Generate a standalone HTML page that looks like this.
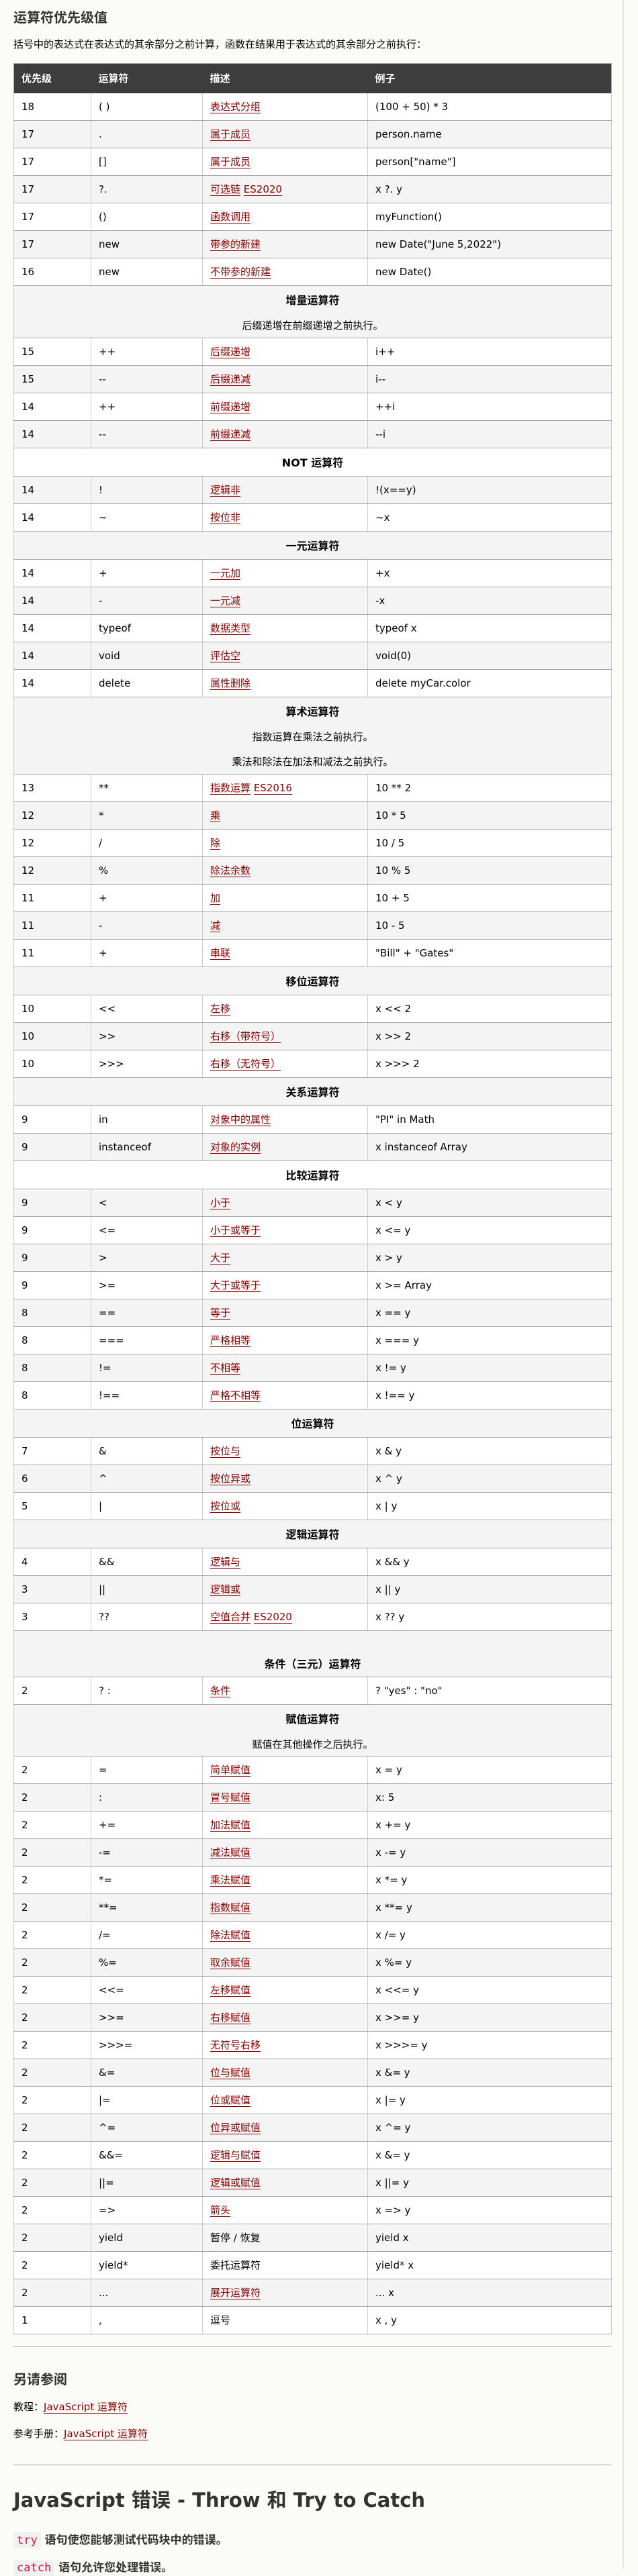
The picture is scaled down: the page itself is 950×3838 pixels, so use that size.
<!DOCTYPE html>
<html><head><meta charset="utf-8">
<style>
html,body{margin:0;padding:0;}
body{width:950px;height:3828px;overflow:hidden;background:#fbfbf7;font-family:"DejaVu Sans","Noto Sans CJK SC",sans-serif;font-size:15px;color:#000;position:relative;}
.vline{position:absolute;left:927px;top:0;width:2px;height:3828px;background:#e6e6e4;}
.wrap{position:absolute;left:20px;top:0;width:890px;}
h2.t{font-size:20px;color:#333;margin:0;position:absolute;top:12px;line-height:28px;}
p.intro{position:absolute;top:55px;margin:0;line-height:22px;font-size:15px;}
table{position:absolute;top:94px;left:0;width:890px;border-collapse:collapse;table-layout:fixed;border:1px solid #aaa;}
th{background:#3d3d3d;color:#fff;text-align:left;font-weight:bold;padding:0 11px;height:44px;line-height:22px;font-size:15px;box-sizing:border-box;}
td{padding:0 11px;height:40px;line-height:20px;border-left:1px solid #ccc;border-right:1px solid #ccc;border-bottom:1px solid #aaa;vertical-align:middle;white-space:nowrap;overflow:hidden;}
tbody tr:nth-child(odd){background:#fff;}
tbody tr:nth-child(even){background:#f4f4f4;}
a{color:#8b0000;text-decoration:none;border-bottom:1px solid #8b0000;}
td.s{text-align:center;padding:0 11px;vertical-align:top;}
td.s .h{margin-top:10px;height:24px;line-height:24px;font-size:16px;font-weight:bold;}
td.s .p{margin-top:14px;height:22px;line-height:22px;}
td.s .p+.p{margin-top:15px;}
hr{position:absolute;left:0;width:890px;border:0;height:1px;background:#aaa;margin:0;}
.abs{position:absolute;left:0;margin:0;}
code{font-family:"DejaVu Sans Mono",monospace;color:#dc143c;background:#f1f1f1;padding:2px 5px;font-weight:normal;}
</style></head><body>
<div class="vline"></div>
<div class="wrap">
<h2 class="t">运算符优先级值</h2>
<p class="intro">括号中的表达式在表达式的其余部分之前计算，函数在结果用于表达式的其余部分之前执行：</p>
<table>
<colgroup><col style="width:115px"><col style="width:166px"><col style="width:246px"><col style="width:363px"></colgroup>
<thead><tr><th>优先级</th><th>运算符</th><th>描述</th><th>例子</th></tr></thead>
<tbody>
<tr><td>18</td><td>( )</td><td><a>表达式分组</a></td><td>(100 + 50) * 3</td></tr>
<tr><td>17</td><td>.</td><td><a>属于成员</a></td><td>person.name</td></tr>
<tr><td>17</td><td>[]</td><td><a>属于成员</a></td><td>person["name"]</td></tr>
<tr><td>17</td><td>?.</td><td><a>可选链</a> <a>ES2020</a></td><td>x ?. y</td></tr>
<tr><td>17</td><td>()</td><td><a>函数调用</a></td><td>myFunction()</td></tr>
<tr><td>17</td><td>new</td><td><a>带参的新建</a></td><td>new Date("June 5,2022")</td></tr>
<tr><td>16</td><td>new</td><td><a>不带参的新建</a></td><td>new Date()</td></tr>
<tr><td colspan="4" class="s" style="height:77px"><div class="h">增量运算符</div><div class="p">后缀递增在前缀递增之前执行。</div></td></tr>
<tr><td>15</td><td>++</td><td><a>后缀递增</a></td><td>i++</td></tr>
<tr><td>15</td><td>--</td><td><a>后缀递减</a></td><td>i--</td></tr>
<tr><td>14</td><td>++</td><td><a>前缀递增</a></td><td>++i</td></tr>
<tr><td>14</td><td>--</td><td><a>前缀递减</a></td><td>--i</td></tr>
<tr><td colspan="4" class="s" style="height:41px"><div class="h">NOT 运算符</div></td></tr>
<tr><td>14</td><td>!</td><td><a>逻辑非</a></td><td>!(x==y)</td></tr>
<tr><td>14</td><td>~</td><td><a>按位非</a></td><td>~x</td></tr>
<tr><td colspan="4" class="s" style="height:41px"><div class="h">一元运算符</div></td></tr>
<tr><td>14</td><td>+</td><td><a>一元加</a></td><td>+x</td></tr>
<tr><td>14</td><td>-</td><td><a>一元减</a></td><td>-x</td></tr>
<tr><td>14</td><td>typeof</td><td><a>数据类型</a></td><td>typeof x</td></tr>
<tr><td>14</td><td>void</td><td><a>评估空</a></td><td>void(0)</td></tr>
<tr><td>14</td><td>delete</td><td><a>属性删除</a></td><td>delete myCar.color</td></tr>
<tr><td colspan="4" class="s" style="height:114px"><div class="h">算术运算符</div><div class="p">指数运算在乘法之前执行。</div><div class="p">乘法和除法在加法和减法之前执行。</div></td></tr>
<tr><td>13</td><td>**</td><td><a>指数运算</a> <a>ES2016</a></td><td>10 ** 2</td></tr>
<tr><td>12</td><td>*</td><td><a>乘</a></td><td>10 * 5</td></tr>
<tr><td>12</td><td>/</td><td><a>除</a></td><td>10 / 5</td></tr>
<tr><td>12</td><td>%</td><td><a>除法余数</a></td><td>10 % 5</td></tr>
<tr><td>11</td><td>+</td><td><a>加</a></td><td>10 + 5</td></tr>
<tr><td>11</td><td>-</td><td><a>减</a></td><td>10 - 5</td></tr>
<tr><td>11</td><td>+</td><td><a>串联</a></td><td>"Bill" + "Gates"</td></tr>
<tr><td colspan="4" class="s" style="height:41px"><div class="h">移位运算符</div></td></tr>
<tr><td>10</td><td>&lt;&lt;</td><td><a>左移</a></td><td>x &lt;&lt; 2</td></tr>
<tr><td>10</td><td>&gt;&gt;</td><td><a>右移（带符号）</a></td><td>x &gt;&gt; 2</td></tr>
<tr><td>10</td><td>&gt;&gt;&gt;</td><td><a>右移（无符号）</a></td><td>x &gt;&gt;&gt; 2</td></tr>
<tr><td colspan="4" class="s" style="height:41px"><div class="h">关系运算符</div></td></tr>
<tr><td>9</td><td>in</td><td><a>对象中的属性</a></td><td>"PI" in Math</td></tr>
<tr><td>9</td><td>instanceof</td><td><a>对象的实例</a></td><td>x instanceof Array</td></tr>
<tr><td colspan="4" class="s" style="height:41px"><div class="h">比较运算符</div></td></tr>
<tr><td>9</td><td>&lt;</td><td><a>小于</a></td><td>x &lt; y</td></tr>
<tr><td>9</td><td>&lt;=</td><td><a>小于或等于</a></td><td>x &lt;= y</td></tr>
<tr><td>9</td><td>&gt;</td><td><a>大于</a></td><td>x &gt; y</td></tr>
<tr><td>9</td><td>&gt;=</td><td><a>大于或等于</a></td><td>x &gt;= Array</td></tr>
<tr><td>8</td><td>==</td><td><a>等于</a></td><td>x == y</td></tr>
<tr><td>8</td><td>===</td><td><a>严格相等</a></td><td>x === y</td></tr>
<tr><td>8</td><td>!=</td><td><a>不相等</a></td><td>x != y</td></tr>
<tr><td>8</td><td>!==</td><td><a>严格不相等</a></td><td>x !== y</td></tr>
<tr><td colspan="4" class="s" style="height:41px"><div class="h">位运算符</div></td></tr>
<tr><td>7</td><td>&amp;</td><td><a>按位与</a></td><td>x &amp; y</td></tr>
<tr><td>6</td><td>^</td><td><a>按位异或</a></td><td>x ^ y</td></tr>
<tr><td>5</td><td>|</td><td><a>按位或</a></td><td>x | y</td></tr>
<tr><td colspan="4" class="s" style="height:41px"><div class="h">逻辑运算符</div></td></tr>
<tr><td>4</td><td>&amp;&amp;</td><td><a>逻辑与</a></td><td>x &amp;&amp; y</td></tr>
<tr><td>3</td><td>||</td><td><a>逻辑或</a></td><td>x || y</td></tr>
<tr><td>3</td><td>??</td><td><a>空值合并</a> <a>ES2020</a></td><td>x ?? y</td></tr>
<tr><td colspan="4" class="s" style="height:68px"><div class="h" style="margin-top:38px">条件（三元）运算符</div></td></tr>
<tr><td>2</td><td>? :</td><td><a>条件</a></td><td>? "yes" : "no"</td></tr>
<tr><td colspan="4" class="s" style="height:76px"><div class="h">赋值运算符</div><div class="p">赋值在其他操作之后执行。</div></td></tr>
<tr><td>2</td><td>=</td><td><a>简单赋值</a></td><td>x = y</td></tr>
<tr><td>2</td><td>:</td><td><a>冒号赋值</a></td><td>x: 5</td></tr>
<tr><td>2</td><td>+=</td><td><a>加法赋值</a></td><td>x += y</td></tr>
<tr><td>2</td><td>-=</td><td><a>减法赋值</a></td><td>x -= y</td></tr>
<tr><td>2</td><td>*=</td><td><a>乘法赋值</a></td><td>x *= y</td></tr>
<tr><td>2</td><td>**=</td><td><a>指数赋值</a></td><td>x **= y</td></tr>
<tr><td>2</td><td>/=</td><td><a>除法赋值</a></td><td>x /= y</td></tr>
<tr><td>2</td><td>%=</td><td><a>取余赋值</a></td><td>x %= y</td></tr>
<tr><td>2</td><td>&lt;&lt;=</td><td><a>左移赋值</a></td><td>x &lt;&lt;= y</td></tr>
<tr><td>2</td><td>&gt;&gt;=</td><td><a>右移赋值</a></td><td>x &gt;&gt;= y</td></tr>
<tr><td>2</td><td>&gt;&gt;&gt;=</td><td><a>无符号右移</a></td><td>x &gt;&gt;&gt;= y</td></tr>
<tr><td>2</td><td>&amp;=</td><td><a>位与赋值</a></td><td>x &amp;= y</td></tr>
<tr><td>2</td><td>|=</td><td><a>位或赋值</a></td><td>x |= y</td></tr>
<tr><td>2</td><td>^=</td><td><a>位异或赋值</a></td><td>x ^= y</td></tr>
<tr><td>2</td><td>&amp;&amp;=</td><td><a>逻辑与赋值</a></td><td>x &amp;= y</td></tr>
<tr><td>2</td><td>||=</td><td><a>逻辑或赋值</a></td><td>x ||= y</td></tr>
<tr><td>2</td><td>=&gt;</td><td><a>箭头</a></td><td>x =&gt; y</td></tr>
<tr><td>2</td><td>yield</td><td>暂停 / 恢复</td><td>yield x</td></tr>
<tr><td>2</td><td>yield*</td><td>委托运算符</td><td>yield* x</td></tr>
<tr><td>2</td><td>...</td><td><a>展开运算符</a></td><td>... x</td></tr>
<tr><td>1</td><td>,</td><td>逗号</td><td>x , y</td></tr>
</tbody>
</table>
<hr style="top:3496px">
<h2 class="abs" style="top:3531px;font-size:20px;line-height:28px;color:#333;">另请参阅</h2>
<p class="abs" style="top:3575px;line-height:22px;">教程：<a>JavaScript 运算符</a></p>
<p class="abs" style="top:3615px;line-height:22px;">参考手册：<a>JavaScript 运算符</a></p>
<hr style="top:3672px">
<h1 class="abs" style="top:3705px;font-size:29px;line-height:40px;color:#333;font-weight:bold;">JavaScript 错误 - Throw 和 Try to Catch</h1>
<p class="abs" style="top:3773px;line-height:24px;font-size:17px;font-weight:bold;color:#333;"><code>try</code> 语句使您能够测试代码块中的错误。</p>
<p class="abs" style="top:3814px;line-height:24px;font-size:17px;font-weight:bold;color:#333;"><code>catch</code> 语句允许您处理错误。</p>
</div>
</body></html>
